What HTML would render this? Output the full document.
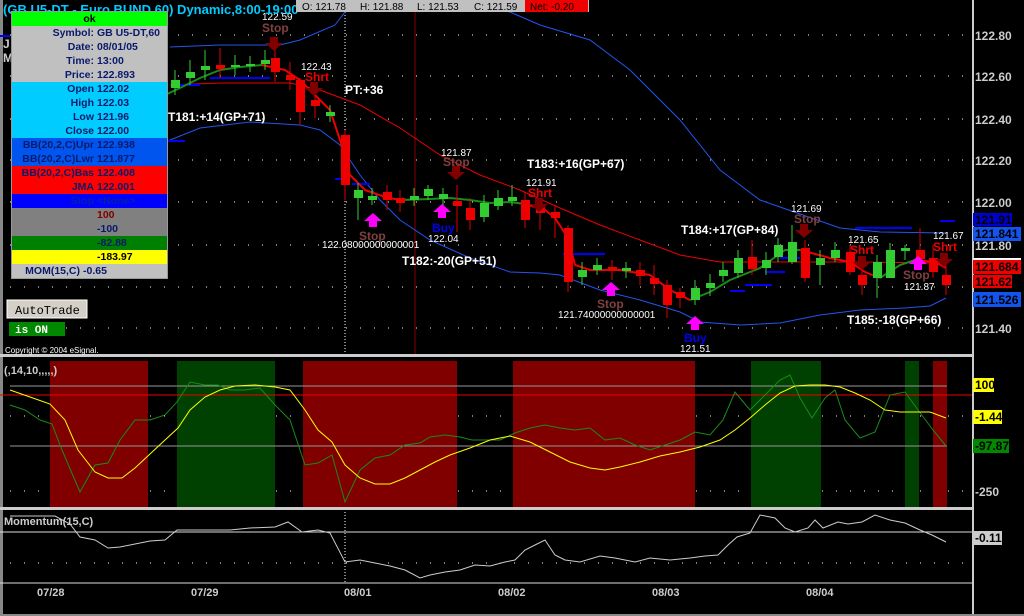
<!DOCTYPE html>
<html><head><meta charset="utf-8"><style>
body{margin:0;background:#000;width:1024px;height:616px;overflow:hidden;font-family:"Liberation Sans",sans-serif}
svg{position:absolute;left:0;top:0}
#dw{position:absolute;left:11px;top:11px;width:155px;border:1px solid #999;font-weight:bold;font-size:10.5px;color:#0a1a6a}
#dw div{height:14px;line-height:14px;white-space:nowrap;overflow:hidden}
#dw span{display:inline-block;width:82px;text-align:right;margin-right:3px}
</style></head><body>
<svg width="1024" height="616" viewBox="0 0 1024 616" font-family="Liberation Sans" font-weight="bold">
<rect x="0" y="0" width="3" height="616" fill="#888"/>
<rect x="972" y="0" width="2" height="616" fill="#ccc"/>
<rect x="0" y="354" width="972" height="3" fill="#ccc"/>
<rect x="0" y="507" width="972" height="3" fill="#ccc"/>
<rect x="0" y="614" width="1024" height="2" fill="#888"/>
<g stroke="#fff" stroke-width="1" stroke-dasharray="1 13">
<line x1="10" y1="35" x2="970" y2="35"/><line x1="10" y1="76" x2="970" y2="76"/><line x1="10" y1="119" x2="970" y2="119"/><line x1="10" y1="160" x2="970" y2="160"/><line x1="10" y1="202" x2="970" y2="202"/><line x1="10" y1="245" x2="970" y2="245"/><line x1="10" y1="287" x2="970" y2="287"/><line x1="10" y1="328" x2="970" y2="328"/>
<line x1="10" y1="416" x2="970" y2="416"/><line x1="10" y1="491" x2="970" y2="491"/><line x1="10" y1="563" x2="970" y2="563"/>
</g>
<g>
<rect x="50" y="361" width="98" height="146" fill="#800000"/>
<rect x="177" y="361" width="98" height="146" fill="#004000"/>
<rect x="303" y="361" width="154" height="146" fill="#800000"/>
<rect x="513" y="361" width="182" height="146" fill="#800000"/>
<rect x="751" y="361" width="70" height="146" fill="#004000"/>
<rect x="905" y="361" width="14" height="146" fill="#004000"/>
<rect x="933" y="361" width="14" height="146" fill="#800000"/>
</g>
<line x1="10" y1="386" x2="947" y2="386" stroke="#999"/>
<line x1="0" y1="395" x2="972" y2="395" stroke="#e00"/>
<line x1="10" y1="446" x2="947" y2="446" stroke="#999"/>
<polyline fill="none" stroke="#1a8a1a" points="10,405 25,410 40,420 52,424 62,450 80,492 95,465 108,463 120,440 135,420 150,420 165,415 177,402 190,382 205,385 218,385 230,390 245,390 260,388 275,405 290,420 305,465 318,463 332,455 345,502 360,470 375,458 390,455 405,445 420,443 430,437 445,435 460,437 472,440 485,440 500,440 515,433 530,428 545,425 560,428 575,430 590,428 605,440 620,438 635,445 650,450 665,445 680,440 695,432 710,435 723,420 735,392 750,410 765,395 780,380 790,375 800,398 812,418 825,398 835,390 845,420 860,438 875,432 890,395 905,392 918,410 933,430 946,446"/>
<polyline fill="none" stroke="#ff0" points="10,390 30,397 50,404 65,420 78,450 95,472 108,478 122,478 135,468 150,454 165,440 178,428 190,410 205,397 220,390 235,386 255,385 275,387 290,390 305,410 318,430 332,442 345,465 360,478 375,484 390,484 405,478 420,470 435,462 450,455 470,448 490,440 510,436 530,442 550,452 570,462 590,468 605,470 620,467 640,462 660,456 680,452 700,447 720,440 735,430 750,418 765,405 780,393 795,386 810,385 825,385 840,387 855,393 870,400 885,410 900,412 915,412 930,412 946,418"/>
<text x="4" y="374" font-size="11" fill="#ccc">(,14,10,,,,,)</text>
<line x1="0" y1="532" x2="972" y2="532" stroke="#ddd"/>
<line x1="0" y1="583" x2="972" y2="583" stroke="#ddd"/>
<line x1="345" y1="512" x2="345" y2="583" stroke="#fff" stroke-dasharray="1 2"/>
<polyline fill="none" stroke="#ccc" points="10,516 55,516 70,524 80,537 95,540 108,548 120,547 135,544 150,541 165,540 177,530 195,530 230,530 250,528 275,527 288,522 302,532 318,530 330,533 345,562 360,560 375,563 390,566 405,570 420,578 430,575 445,572 460,570 475,565 490,566 505,562 515,560 525,550 535,545 545,540 555,555 565,560 580,562 600,556 615,558 635,562 650,558 670,560 690,558 705,556 718,555 728,545 737,537 750,533 760,515 775,518 785,528 795,532 808,528 815,520 823,528 838,522 848,524 862,522 875,515 890,520 905,523 920,530 932,535 946,542"/>
<text x="4" y="525" font-size="11" fill="#ccc">Momentum(15,C)</text>
<g font-size="11" fill="#ccc"><text x="37" y="596">07/28</text><text x="191" y="596">07/29</text><text x="344" y="596">08/01</text><text x="498" y="596">08/02</text><text x="652" y="596">08/03</text><text x="806" y="596">08/04</text></g>
<line x1="415" y1="0" x2="415" y2="354" stroke="#800" stroke-width="1"/>
<line x1="345" y1="0" x2="345" y2="354" stroke="#fff" stroke-dasharray="1 2"/>
<polyline fill="none" stroke="#2255ee" points="170,47 220,45 280,45 300,40 335,25 345,12 360,0"/>
<polyline fill="none" stroke="#2255ee" points="455,0 480,8 510,12 540,25 590,40 630,70 680,120 720,170 760,200 800,214 840,228 880,232 946,233"/>
<polyline fill="none" stroke="#2255ee" points="170,140 200,128 250,122 300,125 320,130 340,145 360,175 380,200 400,220 430,240 470,258 510,272 540,273 560,275 600,290 640,300 680,312 700,322 740,325 780,323 820,315 860,310 905,308 930,306 946,298"/>
<polyline fill="none" stroke="#e00" points="170,85 220,83 290,83 320,90 360,105 400,128 440,155 480,175 520,190 560,208 600,225 640,240 680,255 720,262 780,262 850,262 946,263"/>
<g stroke="#00f" stroke-width="2">
<line x1="175" y1="85" x2="200" y2="85"/><line x1="210" y1="78" x2="270" y2="78"/><line x1="335" y1="179" x2="345" y2="179"/><line x1="352" y1="184" x2="370" y2="184"/><line x1="563" y1="254" x2="605" y2="254"/><line x1="730" y1="291" x2="745" y2="291"/><line x1="745" y1="285" x2="772" y2="285"/><line x1="765" y1="272" x2="785" y2="272"/><line x1="780" y1="258" x2="800" y2="258"/><line x1="855" y1="228" x2="912" y2="228"/><line x1="940" y1="221" x2="955" y2="221"/><line x1="0" y1="36" x2="10" y2="36"/><line x1="166" y1="141" x2="185" y2="141"/>
</g>
<polyline fill="none" stroke="#1a8a1a" stroke-width="2" points="165,95 180,88 200,78 220,70 240,67 262,65"/>
<polyline fill="none" stroke="#e00" stroke-width="2" points="262,65 285,70 300,80 315,95 330,110 340,140 350,175 365,190 385,197 400,200"/>
<polyline fill="none" stroke="#1a8a1a" stroke-width="2" points="400,200 430,199 450,198 470,200 490,203 510,202 525,204"/>
<polyline fill="none" stroke="#e00" stroke-width="2" points="525,204 545,210 555,218 568,238 575,265 590,270 620,270 650,275 670,290 690,300"/>
<polyline fill="none" stroke="#1a8a1a" stroke-width="2" points="690,300 710,292 730,280 760,268 785,250 800,250"/>
<polyline fill="none" stroke="#e00" stroke-width="2" points="800,250 830,258 850,262 865,272 880,278"/>
<polyline fill="none" stroke="#1a8a1a" stroke-width="2" points="880,278 900,265 915,260"/>
<polyline fill="none" stroke="#e00" stroke-width="2" points="915,260 935,262 946,268"/>
<g stroke-width="1">
<g stroke="#3c3"><line x1="175" y1="70" x2="175" y2="95"/><line x1="190" y1="60" x2="190" y2="85"/><line x1="205" y1="50" x2="205" y2="80"/><line x1="235" y1="55" x2="235" y2="75"/><line x1="250" y1="56" x2="250" y2="72"/><line x1="265" y1="50" x2="265" y2="70"/><line x1="330" y1="105" x2="330" y2="122"/><line x1="358" y1="183" x2="358" y2="220"/><line x1="372" y1="188" x2="372" y2="205"/><line x1="414" y1="188" x2="414" y2="206"/><line x1="428" y1="185" x2="428" y2="200"/><line x1="443" y1="188" x2="443" y2="210"/><line x1="484" y1="195" x2="484" y2="222"/><line x1="498" y1="190" x2="498" y2="210"/><line x1="512" y1="185" x2="512" y2="206"/><line x1="582" y1="262" x2="582" y2="285"/><line x1="597" y1="258" x2="597" y2="275"/><line x1="626" y1="262" x2="626" y2="278"/><line x1="695" y1="280" x2="695" y2="305"/><line x1="710" y1="274" x2="710" y2="296"/><line x1="723" y1="262" x2="723" y2="282"/><line x1="738" y1="250" x2="738" y2="278"/><line x1="766" y1="252" x2="766" y2="275"/><line x1="778" y1="238" x2="778" y2="262"/><line x1="792" y1="225" x2="792" y2="264"/><line x1="820" y1="250" x2="820" y2="285"/><line x1="835" y1="242" x2="835" y2="262"/><line x1="877" y1="255" x2="877" y2="298"/><line x1="890" y1="243" x2="890" y2="278"/><line x1="905" y1="245" x2="905" y2="260"/></g>
<g stroke="#d00"><line x1="220" y1="48" x2="220" y2="78"/><line x1="275" y1="48" x2="275" y2="82"/><line x1="290" y1="62" x2="290" y2="90"/><line x1="300" y1="78" x2="300" y2="125"/><line x1="315" y1="90" x2="315" y2="118"/><line x1="345" y1="130" x2="345" y2="200"/><line x1="387" y1="185" x2="387" y2="210"/><line x1="400" y1="190" x2="400" y2="212"/><line x1="457" y1="185" x2="457" y2="232"/><line x1="470" y1="198" x2="470" y2="230"/><line x1="525" y1="192" x2="525" y2="228"/><line x1="540" y1="200" x2="540" y2="230"/><line x1="555" y1="205" x2="555" y2="238"/><line x1="568" y1="225" x2="568" y2="292"/><line x1="612" y1="260" x2="612" y2="280"/><line x1="640" y1="262" x2="640" y2="285"/><line x1="654" y1="265" x2="654" y2="295"/><line x1="667" y1="280" x2="667" y2="318"/><line x1="680" y1="288" x2="680" y2="308"/><line x1="752" y1="240" x2="752" y2="275"/><line x1="805" y1="240" x2="805" y2="282"/><line x1="850" y1="245" x2="850" y2="275"/><line x1="862" y1="268" x2="862" y2="295"/><line x1="920" y1="228" x2="920" y2="270"/><line x1="933" y1="245" x2="933" y2="278"/><line x1="946" y1="265" x2="946" y2="295"/></g>
</g>
<g fill="#3c3"><rect x="171" y="80" width="9" height="8"/><rect x="186" y="72" width="9" height="6"/><rect x="201" y="66" width="9" height="4"/><rect x="231" y="65" width="9" height="2"/><rect x="246" y="64" width="9" height="2"/><rect x="261" y="60" width="9" height="4"/><rect x="326" y="112" width="9" height="4"/><rect x="354" y="190" width="9" height="8"/><rect x="368" y="196" width="9" height="4"/><rect x="410" y="196" width="9" height="4"/><rect x="424" y="189" width="9" height="7"/><rect x="439" y="194" width="9" height="5"/><rect x="480" y="203" width="9" height="14"/><rect x="494" y="198" width="9" height="8"/><rect x="508" y="197" width="9" height="4"/><rect x="578" y="270" width="9" height="7"/><rect x="593" y="265" width="9" height="5"/><rect x="622" y="268" width="9" height="3"/><rect x="691" y="288" width="9" height="12"/><rect x="706" y="283" width="9" height="5"/><rect x="719" y="270" width="9" height="6"/><rect x="734" y="258" width="9" height="15"/><rect x="762" y="260" width="9" height="8"/><rect x="774" y="245" width="9" height="12"/><rect x="788" y="242" width="9" height="20"/><rect x="816" y="258" width="9" height="7"/><rect x="831" y="250" width="9" height="8"/><rect x="873" y="262" width="9" height="16"/><rect x="886" y="250" width="9" height="28"/><rect x="901" y="248" width="9" height="3"/></g>
<g fill="#e00"><rect x="216" y="65" width="9" height="4"/><rect x="271" y="58" width="9" height="14"/><rect x="286" y="75" width="9" height="5"/><rect x="296" y="80" width="9" height="32"/><rect x="311" y="100" width="9" height="6"/><rect x="341" y="135" width="9" height="50"/><rect x="383" y="192" width="9" height="8"/><rect x="396" y="198" width="9" height="5"/><rect x="453" y="201" width="9" height="5"/><rect x="466" y="208" width="9" height="12"/><rect x="521" y="200" width="9" height="20"/><rect x="536" y="207" width="9" height="6"/><rect x="551" y="212" width="9" height="6"/><rect x="564" y="228" width="9" height="54"/><rect x="608" y="267" width="9" height="3"/><rect x="636" y="270" width="9" height="6"/><rect x="650" y="278" width="9" height="6"/><rect x="663" y="285" width="9" height="20"/><rect x="676" y="292" width="9" height="6"/><rect x="748" y="257" width="9" height="12"/><rect x="801" y="248" width="9" height="30"/><rect x="846" y="252" width="9" height="20"/><rect x="858" y="275" width="9" height="10"/><rect x="916" y="250" width="9" height="9"/><rect x="929" y="258" width="9" height="14"/><rect x="942" y="275" width="9" height="10"/></g>
<g fill="#800000"><path d="M270,37h8v6h5l-9,8-9-8h5z"/><path d="M310,82h8v6h5l-9,8-9-8h5z"/><path d="M452,166h8v6h5l-9,8-9-8h5z"/><path d="M535,198h8v6h5l-9,8-9-8h5z"/><path d="M800,224h8v6h5l-9,8-9-8h5z"/><path d="M858,256h8v6h5l-9,8-9-8h5z"/><path d="M940,253h8v6h5l-9,8-9-8h5z"/></g>
<g fill="#f0f"><path d="M373,213l-9,8h5v6h8v-6h5z"/><path d="M442,204l-9,8h5v6h8v-6h5z"/><path d="M611,282l-9,8h5v6h8v-6h5z"/><path d="M695,316l-9,8h5v6h8v-6h5z"/><path d="M918,256l-9,8h5v6h8v-6h5z"/></g>
<g font-size="12" fill="#804040"><text x="262" y="32">Stop</text><text x="359" y="240">Stop</text><text x="443" y="166">Stop</text><text x="597" y="308">Stop</text><text x="794" y="223">Stop</text><text x="903" y="279">Stop</text></g>
<g font-size="12" fill="#e00"><text x="305" y="81">Shrt</text><text x="528" y="197">Shrt</text><text x="850" y="254">Shrt</text><text x="933" y="251">Shrt</text></g>
<g font-size="12" fill="#00e"><text x="432" y="232">Buy</text><text x="684" y="342">Buy</text></g>
<g font-size="10" font-weight="normal" fill="#fff"><text x="262" y="20">122.59</text><text x="301" y="70">122.43</text><text x="441" y="156">121.87</text><text x="526" y="186">121.91</text><text x="322" y="248">122.08000000000001</text><text x="428" y="242">122.04</text><text x="558" y="318">121.74000000000001</text><text x="680" y="352">121.51</text><text x="791" y="212">121.69</text><text x="848" y="243">121.65</text><text x="933" y="239">121.67</text><text x="904" y="290">121.87</text></g>
<g font-size="12" fill="#fff"><text x="168" y="121">T181:+14(GP+71)</text><text x="345" y="94">PT:+36</text><text x="527" y="168">T183:+16(GP+67)</text><text x="402" y="265">T182:-20(GP+51)</text><text x="681" y="234">T184:+17(GP+84)</text><text x="847" y="324">T185:-18(GP+66)</text></g>
<text x="3" y="14" font-size="13" fill="#0cf">(GB U5-DT - Euro BUND 60)  Dynamic,8:00-19:00</text>
<text x="3" y="48" font-size="12" fill="#ccc">J</text><text x="3" y="62" font-size="12" fill="#ccc">M</text>
<rect x="296" y="0" width="293" height="12" fill="#c0c0c0"/>
<rect x="525" y="0" width="63" height="12" fill="#e00"/>
<g font-size="10" font-weight="normal" fill="#000"><text x="302" y="10">O: 121.78</text><text x="360" y="10">H: 121.88</text><text x="417" y="10">L: 121.53</text><text x="474" y="10">C: 121.59</text><text x="530" y="10">Net: -0.20</text></g>
<g font-size="12" fill="#ccc"><text x="975" y="40">122.80</text><text x="975" y="81">122.60</text><text x="975" y="124">122.40</text><text x="975" y="165">122.20</text><text x="975" y="207">122.00</text><text x="975" y="250">121.80</text><text x="975" y="333">121.40</text><text x="975" y="496">-250</text></g>
<rect x="973" y="213" width="39" height="13" fill="#0000cc"/><text x="975" y="224" font-size="12" fill="#000">121.91</text>
<rect x="973" y="227" width="48" height="14" fill="#1155ee"/><text x="975" y="238" font-size="12" fill="#000">121.841</text>
<rect x="973" y="258" width="48" height="2" fill="#fff"/>
<rect x="973" y="260" width="48" height="14" fill="#e00"/><text x="975" y="271" font-size="12" fill="#000">121.684</text>
<rect x="973" y="275" width="39" height="13" fill="#e00"/><text x="975" y="286" font-size="12" fill="#000">121.62</text>
<rect x="973" y="292" width="48" height="15" fill="#1155ee"/><text x="975" y="304" font-size="12" fill="#000">121.526</text>
<rect x="973" y="378" width="21" height="14" fill="#ff0"/><text x="975" y="389" font-size="12" fill="#000">100</text>
<rect x="973" y="410" width="29" height="14" fill="#ff0"/><text x="975" y="421" font-size="12" fill="#000">-1.44</text>
<rect x="973" y="439" width="36" height="14" fill="#080"/><text x="975" y="450" font-size="12" fill="#000">-97.87</text>
<rect x="973" y="531" width="29" height="14" fill="#ccc"/><text x="975" y="542" font-size="12" fill="#000">-0.11</text>
<rect x="7" y="300" width="80" height="18" fill="#d4d0c8" stroke="#fff"/>
<text x="15" y="314" font-family="Liberation Mono" font-weight="normal" font-size="12" fill="#000">AutoTrade</text>
<rect x="9" y="322" width="56" height="14" fill="#080"/>
<text x="15" y="333" font-family="Liberation Mono" font-size="11" fill="#fff">is ON</text>
<text x="5" y="353" font-size="8" font-weight="normal" fill="#fff">Copyright © 2004 eSignal.</text>
</svg>
<div id="dw">
<div style="background:#00ff00;text-align:center;color:#000">ok</div>
<div style="background:#c0c0c0"><span>Symbol:</span>GB U5-DT,60</div>
<div style="background:#c0c0c0"><span>Date:</span>08/01/05</div>
<div style="background:#c0c0c0"><span>Time:</span>13:00</div>
<div style="background:#c0c0c0"><span>Price:</span>122.893</div>
<div style="background:#00ccff"><span>Open</span>122.02</div>
<div style="background:#00ccff"><span>High</span>122.03</div>
<div style="background:#00ccff"><span>Low</span>121.96</div>
<div style="background:#00ccff"><span>Close</span>122.00</div>
<div style="background:#0055ee"><span>BB(20,2,C)Upr</span>122.938</div>
<div style="background:#0055ee"><span>BB(20,2,C)Lwr</span>121.877</div>
<div style="background:#ff0000"><span>BB(20,2,C)Bas</span>122.408</div>
<div style="background:#ff0000"><span>JMA</span>122.001</div>
<div style="background:#0000ff;color:#0022aa"><span>Stop</span>&lt;None&gt;</div>
<div style="background:#808080;color:#800000"><span></span>100</div>
<div style="background:#808080"><span></span>-100</div>
<div style="background:#008000"><span></span>-82.88</div>
<div style="background:#ffff00;color:#000"><span></span>-183.97</div>
<div style="background:#c0c0c0"><span style="width:68px">MOM(15,C)</span>-0.65</div>
</div>
</body></html>
